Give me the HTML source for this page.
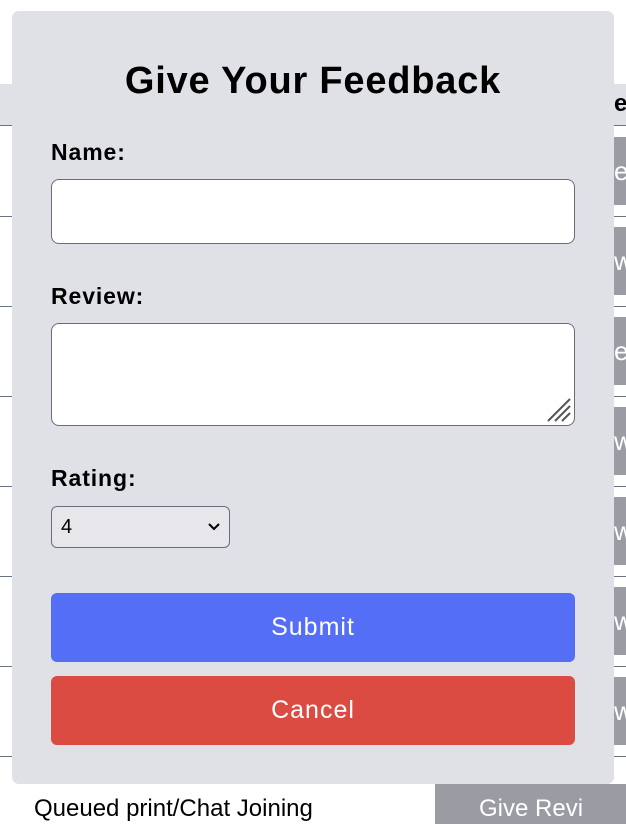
<!DOCTYPE html>
<html><head><style>
body{margin:0;width:626px;height:796px;overflow:hidden;background:#fff;font-family:"Liberation Sans",sans-serif;position:relative}
.hdr{position:absolute;left:0;top:84px;width:626px;height:41px;background:#e0e1e6;border-bottom:1px solid #6b7280}
.line{position:absolute;left:0;width:626px;height:1px;background:#6b7280}
.gb{position:absolute;left:614px;width:20px;height:68px;background:#9a9ba3;color:#fff;font-size:26px;line-height:68px;overflow:hidden}
.modal{position:absolute;left:12px;top:11px;width:602px;height:773px;background:#e0e1e6;border-radius:7px}
h1{position:absolute;left:0;width:602px;top:51px;margin:0;text-align:center;font-size:38px;font-weight:bold;line-height:1;letter-spacing:0.8px}
.lab{position:absolute;left:39px;font-size:23px;font-weight:bold;letter-spacing:0.9px}
.inp{position:absolute;left:39px;width:522px;background:#fff;border:1px solid #6b6b7b;border-radius:8px}
.btn{position:absolute;left:39px;width:524px;height:69px;border-radius:6px;color:#fff;font-size:25px;text-align:center;line-height:69px;letter-spacing:1px}
</style></head><body>
<div class="hdr"><span style="position:absolute;left:614px;top:6px;font-weight:bold;font-size:24px">e</span></div>
<div class="line" style="top:216px"></div><div class="line" style="top:306px"></div>
<div class="line" style="top:396px"></div><div class="line" style="top:486px"></div>
<div class="line" style="top:576px"></div><div class="line" style="top:666px"></div>
<div class="line" style="top:756px"></div>
<div class="gb" style="top:137px">er</div><div class="gb" style="top:227px">w</div>
<div class="gb" style="top:317px">er</div><div class="gb" style="top:407px">w</div>
<div class="gb" style="top:497px">w</div><div class="gb" style="top:587px">w</div>
<div class="gb" style="top:677px">w</div>
<div style="position:absolute;left:435px;top:784px;width:200px;height:40px;background:#9a9ba3;color:#fff;font-size:24px;padding-left:44px;line-height:30px;padding-top:10px;box-sizing:border-box">Give Revi</div>
<div style="position:absolute;left:34px;top:794px;font-size:24px;line-height:30px">Queued print/Chat Joining</div>
<div class="modal">
<h1>Give Your Feedback</h1>
<div class="lab" style="top:128px">Name:</div>
<div class="inp" style="top:168px;height:63px"></div>
<div class="lab" style="top:272px">Review:</div>
<div class="inp" style="top:312px;height:101px">
<svg style="position:absolute;right:2px;bottom:2px" width="26" height="26"><path d="M2 24L24 2M9 24L24 9M16 24L24 16" stroke="#555" stroke-width="2"/></svg></div>
<div class="lab" style="top:454px">Rating:</div>
<div style="position:absolute;left:39px;top:495px;height:40px;border:1px solid #6b6b7b;border-radius:6px;background:#e6e6eb;font-size:20px;line-height:40px;padding-left:9px;width:168px">4
<svg style="position:absolute;right:9px;top:15px" width="12" height="10"><path d="M1 2L6 7L11 2" stroke="#000" stroke-width="2" fill="none"/></svg></div>
<div class="btn" style="top:582px;background:#546ff5">Submit</div>
<div class="btn" style="top:665px;background:#db4b41">Cancel</div>
</div>
</body></html>
